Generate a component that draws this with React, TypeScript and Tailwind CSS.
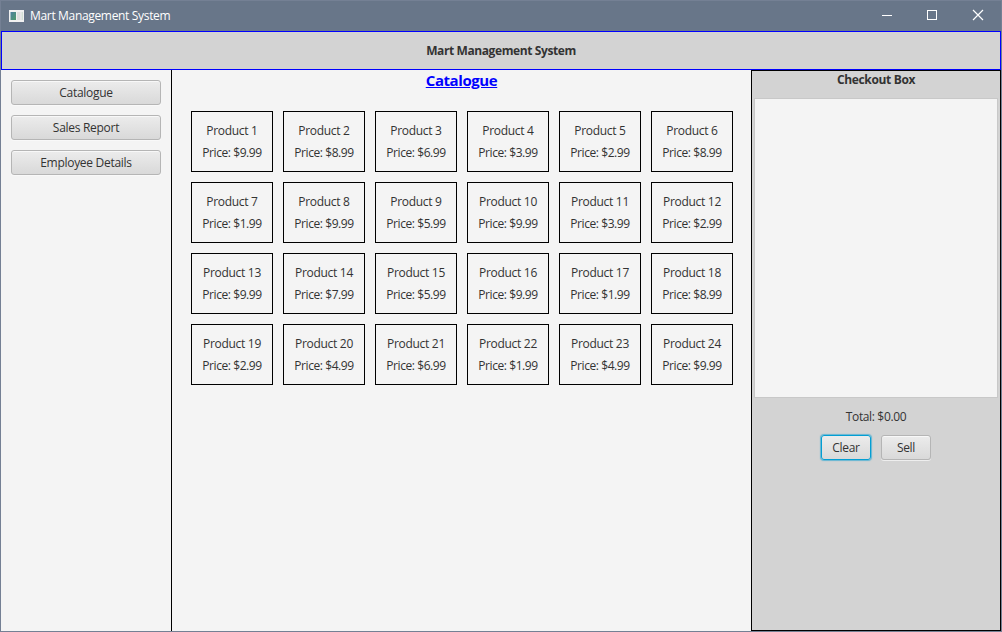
import React from 'react';

const prices = ['9.99','8.99','6.99','3.99','2.99','8.99','1.99','9.99','5.99','9.99','3.99','2.99','9.99','7.99','5.99','9.99','1.99','8.99','2.99','4.99','6.99','1.99','4.99','9.99'];

function NavButton({ label }: { label: string }) {
  return (
    <button className="flex h-[25px] w-[150px] items-center justify-center rounded-[3px] border border-[#b5b5b5] bg-gradient-to-b from-[#ececec] to-[#d9d9d9] tracking-[-0.29px] shadow-[inset_0_1px_0_#f8f8f8,0_1px_0_#f9f9f9]">
      {label}
    </button>
  );
}

export default function App() {
  return (
    <div className="flex h-[632px] w-[1002px] flex-col overflow-hidden border border-[#748094] bg-[#f4f4f4] font-['Open_Sans','Noto_Sans',sans-serif] text-[12px] leading-4 text-[#333333]">
      <div className="flex h-[30px] shrink-0 items-center bg-[#687689] text-white">
        <svg className="ml-2 block" width="15" height="12" viewBox="0 0 15 12">
          <defs>
            <linearGradient id="pane" x1="0" y1="0" x2="1" y2="1">
              <stop offset="0" stopColor="#4d7fa0" />
              <stop offset="1" stopColor="#4f9a6a" />
            </linearGradient>
          </defs>
          <rect width="15" height="12" fill="#f1f1f1" />
          <rect x="1.5" y="2" width="5.5" height="8" fill="url(#pane)" />
          <rect x="8" y="2" width="3.5" height="8" fill="#dedede" />
          <rect x="12.5" y="2" width="1.5" height="8" fill="#d3dfd6" />
        </svg>
        <span className="ml-1.5 grow tracking-[-0.33px] whitespace-nowrap">Mart Management System</span>
        <svg className="block" width="120" height="30" viewBox="0 0 120 30" fill="none" stroke="#fff" shapeRendering="crispEdges">
          <path d="M1 14.5h10M46.5 9.5h9v9h-9z" />
          <path d="M92 9l10 10M102 9l-10 10" strokeWidth="1.2" shapeRendering="auto" />
        </svg>
      </div>
      <header className="flex h-[39px] shrink-0 items-center justify-center border border-[#0000ff] bg-[#d3d3d3] font-bold tracking-[-0.4px]">
        <span>Mart Management System</span>
      </header>
      <div className="flex min-h-0 grow">
        <nav className="flex w-[171px] shrink-0 flex-col gap-2.5 border-r border-black pt-2.5 pl-2.5">
          <NavButton label="Catalogue" />
          <NavButton label="Sales Report" />
          <NavButton label="Employee Details" />
        </nav>
        <main className="flex w-[579px] shrink-0 flex-col">
          <h1 className="h-[41px] text-center text-[15px] leading-5 font-bold tracking-[-0.42px] text-[#0000ff] underline">Catalogue</h1>
          <div className="ml-[19px] grid grid-cols-[repeat(6,82px)] gap-2.5">
            {prices.map((price, i) => (
              <div key={i} className="flex h-[61px] flex-col items-center justify-center gap-1.5 border border-black whitespace-nowrap">
                <span className="tracking-[-0.3px]">Product {i + 1}</span>
                <span className="tracking-[-0.42px]">Price: ${price}</span>
              </div>
            ))}
          </div>
        </main>
        <aside className="flex w-[250px] shrink-0 flex-col items-center border border-black bg-[#d3d3d3]">
          <h2 className="h-[27px] leading-[18px] font-bold tracking-[-0.35px]">Checkout Box</h2>
          <div className="h-[300px] w-[244px] border border-[#c8c8c8] bg-[#f4f4f4]" />
          <p className="mt-[11px] h-[26px] tracking-[-0.35px]">Total: $0.00</p>
          <div className="flex gap-2.5 tracking-[-0.3px]">
            <button className="h-[25px] w-[50px] rounded-[3px] border border-[#039ed3] bg-gradient-to-b from-[#ececec] to-[#d9d9d9] shadow-[0_0_1px_1px_#039ed388]">Clear</button>
            <button className="h-[25px] w-[50px] rounded-[3px] border border-[#b5b5b5] bg-gradient-to-b from-[#ececec] to-[#d9d9d9] shadow-[inset_0_1px_0_#f8f8f8,0_1px_0_#eeeeee]">Sell</button>
          </div>
        </aside>
      </div>
    </div>
  );
}
